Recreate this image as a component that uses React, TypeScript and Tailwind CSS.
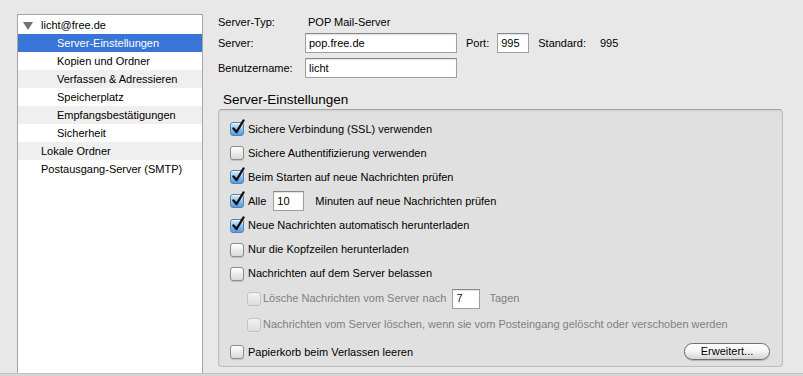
import { ReactNode } from "react";

const font = { fontFamily: '"Liberation Sans", Arial, sans-serif' };

const accounts = [
    { label: "licht@free.de", level: 0, toggle: true },
    { label: "Server-Einstellungen", level: 1 },
    { label: "Kopien und Ordner", level: 1 },
    { label: "Verfassen & Adressieren", level: 1 },
    { label: "Speicherplatz", level: 1 },
    { label: "Empfangsbestätigungen", level: 1 },
    { label: "Sicherheit", level: 1 },
    { label: "Lokale Ordner", level: 0 },
    { label: "Postausgang-Server (SMTP)", level: 0 },
];

function Check({ checked = false, disabled = false }: { checked?: boolean; disabled?: boolean }) {
    return (
        <span className="relative inline-block w-[14px] h-[14px] shrink-0">
            <span
                className={
                    checked
                        ? "absolute inset-0 rounded-[3px] border border-[#5b7fa6] bg-gradient-to-b from-[#d6ecfd] via-[#8cc3f1] to-[#4f9de6] shadow-[inset_0_1px_1px_rgba(255,255,255,0.7)]"
                        : disabled
                        ? "absolute inset-0 rounded-[3px] border border-[#c2c2c2] bg-gradient-to-b from-[#f2f2f2] to-[#dedede]"
                        : "absolute inset-0 rounded-[3px] border border-[#8c8c8c] bg-gradient-to-b from-[#ffffff] to-[#d9d9d9] shadow-[0_1px_1px_rgba(0,0,0,0.15)]"
                }
            />
            {checked && (
                <svg className="absolute left-[1px] top-[-3px]" width="15" height="16" viewBox="0 0 15 16">
                    <path d="M2.5 9.5 L5.5 13 L12.5 1.5" fill="none" stroke="#111" strokeWidth="2.4" strokeLinecap="round" strokeLinejoin="round" />
                </svg>
            )}
        </span>
    );
}

function Row({ h, children, indent = false }: { h: string; children: ReactNode; indent?: boolean }) {
    return <div className={`flex items-center ${h} ${indent ? "pl-[28px]" : "pl-[11px]"}`}>{children}</div>;
}

function Field({ value, className }: { value: string; className: string }) {
    return (
        <div className={`h-[20px] bg-white border border-[#9f9f9f] border-t-[#888] shadow-[inset_0_1px_1px_rgba(0,0,0,0.12)] px-[3px] flex items-center text-black ${className}`}>
            {value}
        </div>
    );
}

export default function App() {
    return (
        <div className="w-[803px] h-[376px] bg-[#e8e8e8] text-[11px] text-black flex flex-col overflow-hidden" style={font}>
            <div className="flex flex-1 min-h-0">
                <div className="pl-[17px] pt-[14px] w-[218px] shrink-0 flex">
                    <div className="w-[186px] bg-white border border-[#a6a6a6] border-b-0 pt-[1px]">
                        {accounts.map((a, i) => (
                            <div
                                key={a.label}
                                className={`h-[18px] flex items-center ${i === 1 ? "bg-[#3875d7] text-white" : i % 2 === 1 ? "bg-[#efefef]" : "bg-white"} ${a.level === 1 ? "pl-[39px]" : "pl-[23px]"} relative`}
                            >
                                {a.toggle && (
                                    <svg className="absolute left-[5px] top-[6px]" width="10" height="8" viewBox="0 0 10 8">
                                        <path d="M0 0 H10 L5 8 Z" fill="#727272" />
                                    </svg>
                                )}
                                {a.label}
                            </div>
                        ))}
                    </div>
                </div>

                <div className="flex-1 pr-[20px]">
                    <div className="grid grid-cols-[87px_auto] items-center">
                        <div className="h-[20px] mt-[12px] flex items-center">Server-Typ:</div>
                        <div className="h-[20px] mt-[12px] flex items-center pl-[3px]">POP Mail-Server</div>
                        <div className="mt-[1px] flex items-center">Server:</div>
                        <div className="mt-[1px] flex items-center">
                            <Field value="pop.free.de" className="w-[152px]" />
                            <span className="ml-[9px]">Port:</span>
                            <Field value="995" className="w-[32px] ml-[8px]" />
                            <span className="ml-[9px]">Standard:</span>
                            <span className="ml-[14px]">995</span>
                        </div>
                        <div className="mt-[5px] flex items-center">Benutzername:</div>
                        <div className="mt-[5px] flex items-center">
                            <Field value="licht" className="w-[152px]" />
                        </div>
                    </div>

                    <div className="mt-[14px] pl-[5px] text-[13.5px] leading-[16px]">Server-Einstellungen</div>

                    <div className="mt-[1px] rounded-[4px] border border-[#bdbdbd] border-t-[#a4a4a4] bg-[#e0e0e0] shadow-[inset_0_1px_2px_rgba(0,0,0,0.08)] pt-[7px]">
                        <Row h="h-[24px]">
                            <Check checked />
                            <span className="ml-[4px]">Sichere Verbindung (SSL) verwenden</span>
                        </Row>
                        <Row h="h-[24px]">
                            <Check />
                            <span className="ml-[4px]">Sichere Authentifizierung verwenden</span>
                        </Row>
                        <Row h="h-[24px]">
                            <Check checked />
                            <span className="ml-[4px]">Beim Starten auf neue Nachrichten prüfen</span>
                        </Row>
                        <Row h="h-[24px]">
                            <Check checked />
                            <span className="ml-[4px]">Alle</span>
                            <Field value="10" className="w-[31px] ml-[7px]" />
                            <span className="ml-[11px]">Minuten auf neue Nachrichten prüfen</span>
                        </Row>
                        <Row h="h-[25px]">
                            <Check checked />
                            <span className="ml-[4px]">Neue Nachrichten automatisch herunterladen</span>
                        </Row>
                        <Row h="h-[23px]">
                            <Check />
                            <span className="ml-[4px]">Nur die Kopfzeilen herunterladen</span>
                        </Row>
                        <Row h="h-[25px]">
                            <Check />
                            <span className="ml-[4px]">Nachrichten auf dem Server belassen</span>
                        </Row>
                        <Row h="h-[25px]" indent>
                            <Check disabled />
                            <span className="ml-[2px] text-[#7f7f7f]">Lösche Nachrichten vom Server nach</span>
                            <Field value="7" className="w-[28px] ml-[6px] !text-[#222]" />
                            <span className="ml-[9px] text-[#7f7f7f]">Tagen</span>
                        </Row>
                        <Row h="h-[27px]" indent>
                            <Check disabled />
                            <span className="ml-[2px] text-[#7f7f7f]">
                                Nachrichten vom Server löschen, wenn sie vom Posteingang gelöscht oder verschoben werden
                            </span>
                        </Row>
                        <div className="flex items-center h-[28px] pl-[11px] pr-[12px]">
                            <Check />
                            <span className="ml-[4px]">Papierkorb beim Verlassen leeren</span>
                            <button className="ml-auto mt-[-2px] w-[86px] h-[17px] rounded-full border border-[#6f6f6f] bg-gradient-to-b from-white via-[#f4f4f4] to-[#d4d4d4] shadow-[0_1px_1px_rgba(0,0,0,0.2)] text-[11px] leading-[15px] text-black">
                                Erweitert...
                            </button>
                        </div>
                    </div>
                </div>
            </div>
            <div className="h-[3px] bg-[#d6d6d6] border-t border-[#c4c4c4] shrink-0" />
        </div>
    );
}
